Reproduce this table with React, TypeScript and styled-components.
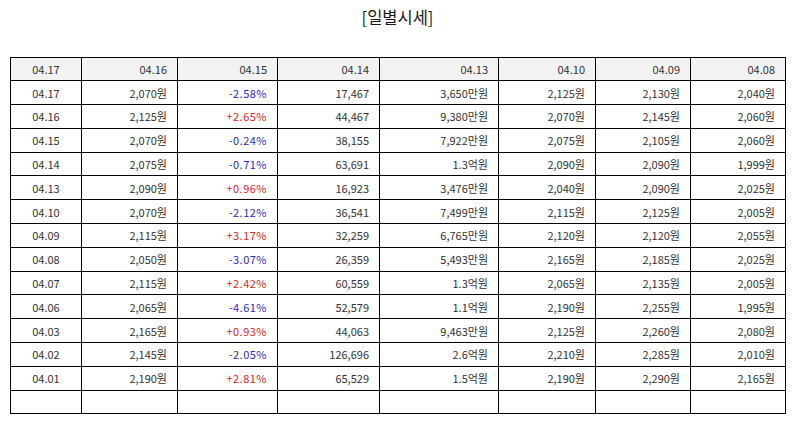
import styled, { createGlobalStyle } from "styled-components";

type Row = [string, string, string, string, string, string, string, string];

const headers = ["04.17", "04.16", "04.15", "04.14", "04.13", "04.10", "04.09", "04.08"];

const rows: Row[] = [
  ["04.17", "2,070원", "-2.58%", "17,467", "3,650만원", "2,125원", "2,130원", "2,040원"],
  ["04.16", "2,125원", "+2.65%", "44,467", "9,380만원", "2,070원", "2,145원", "2,060원"],
  ["04.15", "2,070원", "-0.24%", "38,155", "7,922만원", "2,075원", "2,105원", "2,060원"],
  ["04.14", "2,075원", "-0.71%", "63,691", "1.3억원", "2,090원", "2,090원", "1,999원"],
  ["04.13", "2,090원", "+0.96%", "16,923", "3,476만원", "2,040원", "2,090원", "2,025원"],
  ["04.10", "2,070원", "-2.12%", "36,541", "7,499만원", "2,115원", "2,125원", "2,005원"],
  ["04.09", "2,115원", "+3.17%", "32,259", "6,765만원", "2,120원", "2,120원", "2,055원"],
  ["04.08", "2,050원", "-3.07%", "26,359", "5,493만원", "2,165원", "2,185원", "2,025원"],
  ["04.07", "2,115원", "+2.42%", "60,559", "1.3억원", "2,065원", "2,135원", "2,005원"],
  ["04.06", "2,065원", "-4.61%", "52,579", "1.1억원", "2,190원", "2,255원", "1,995원"],
  ["04.03", "2,165원", "+0.93%", "44,063", "9,463만원", "2,125원", "2,260원", "2,080원"],
  ["04.02", "2,145원", "-2.05%", "126,696", "2.6억원", "2,210원", "2,285원", "2,010원"],
  ["04.01", "2,190원", "+2.81%", "65,529", "1.5억원", "2,190원", "2,290원", "2,165원"],
];

const widths = [71, 96, 100, 102, 119, 97, 95, 95];

function tone(text: string, col: number) {
  if (col !== 2) return "plain";
  return text.startsWith("+") ? "up" : "down";
}

function App() {
  return (
    <Page>
      <GlobalStyle />
      <Title>[일별시세]</Title>
      <Table>
        <colgroup>
          {widths.map((w, i) => (
            <col key={i} width={w} />
          ))}
        </colgroup>
        <thead>
          <tr>
            {headers.map((h, i) => (
              <Head key={h} $first={i === 0}>
                {h}
              </Head>
            ))}
          </tr>
        </thead>
        <tbody>
          {rows.map((row) => (
            <tr key={row[0]}>
              {row.map((cell, i) => (
                <Cell key={i} $first={i === 0} $tone={tone(cell, i)}>
                  {cell}
                </Cell>
              ))}
            </tr>
          ))}
          <tr>
            {widths.map((_, i) => (
              <Cell key={i} $first={i === 0} $tone="plain" />
            ))}
          </tr>
        </tbody>
      </Table>
    </Page>
  );
}

const GlobalStyle = createGlobalStyle`
  body {
    margin: 0;
    background: #ffffff;
    font-family: "Noto Sans CJK KR", "Noto Sans", sans-serif;
  }
`;

const Page = styled.div`
  width: 794px;
  padding: 0 9px 0 10px;
  box-sizing: border-box;
`;

const Title = styled.h2`
  margin: 0;
  padding-top: 5px;
  height: 50px;
  box-sizing: border-box;
  text-align: center;
  font-size: 16.5px;
  font-weight: 400;
  line-height: 24px;
  color: #1a1a1a;
`;

const Table = styled.table`
  width: 776px;
  table-layout: fixed;
  border-collapse: collapse;
  margin-top: 6.5px;
  font-size: 11px;
  color: #333;
`;

const Head = styled.th<{ $first: boolean }>`
  height: 22.8px;
  padding: 0 10px 0 0;
  border: 1px solid #000;
  background: #f2f2f2;
  font-weight: 400;
  text-align: ${({ $first }) => ($first ? "center" : "right")};
  ${({ $first }) => $first && "padding: 0;"}
`;

const colors = {
  plain: "#333",
  up: "#e0222a",
  down: "#2b2bc8",
};

const Cell = styled.td<{ $first: boolean; $tone: keyof typeof colors }>`
  height: 22.8px;
  padding: 0 10px 0 0;
  border: 1px solid #000;
  text-align: ${({ $first }) => ($first ? "center" : "right")};
  ${({ $first }) => $first && "padding: 0;"}
  color: ${({ $tone }) => colors[$tone]};
  letter-spacing: ${({ $tone }) => ($tone === "plain" ? "0" : "0.5px")};
  white-space: nowrap;
`;

export default App;
